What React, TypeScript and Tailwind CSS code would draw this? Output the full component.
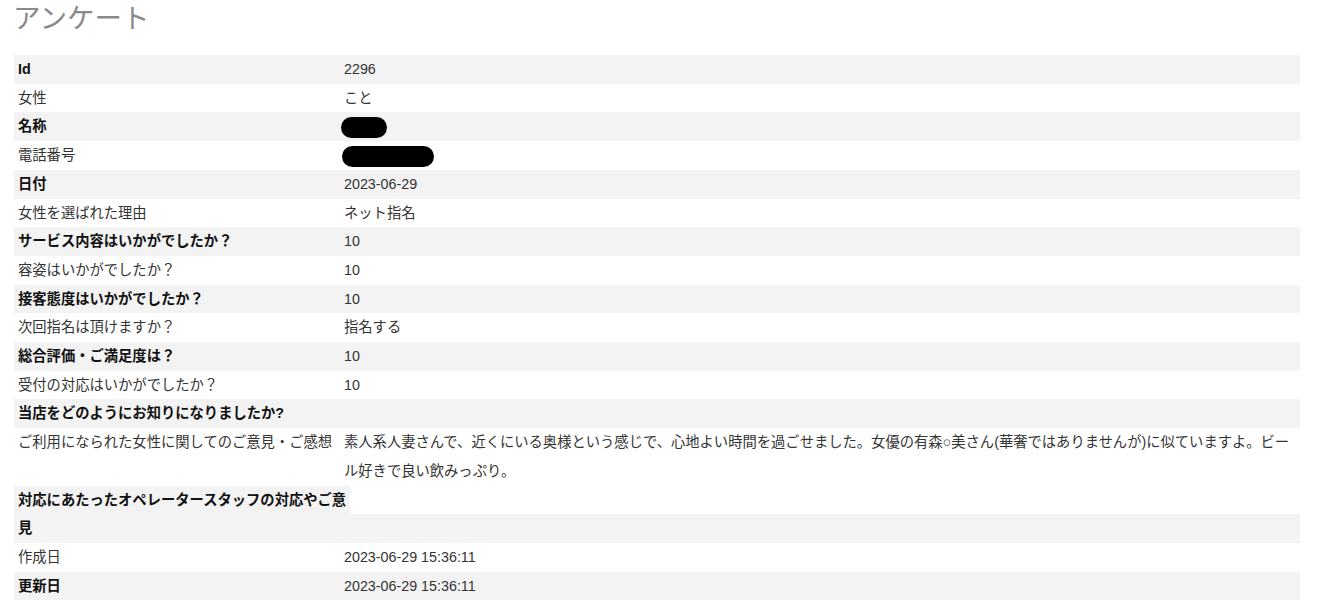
import React from "react";

type Row = { label: string; value?: React.ReactNode };

const rows: Row[] = [
  { label: "Id", value: "2296" },
  { label: "女性", value: "こと" },
  { label: "名称", value: <span className="inline-block align-middle w-[46px] h-[21px] rounded-full bg-black -ml-[3px]" /> },
  { label: "電話番号", value: <span className="inline-block align-middle w-[92px] h-[21px] rounded-full bg-black -ml-[2px]" /> },
  { label: "日付", value: "2023-06-29" },
  { label: "女性を選ばれた理由", value: "ネット指名" },
  { label: "サービス内容はいかがでしたか？", value: "10" },
  { label: "容姿はいかがでしたか？", value: "10" },
  { label: "接客態度はいかがでしたか？", value: "10" },
  { label: "次回指名は頂けますか？", value: "指名する" },
  { label: "総合評価・ご満足度は？", value: "10" },
  { label: "受付の対応はいかがでしたか？", value: "10" },
  { label: "当店をどのようにお知りになりましたか?", value: "" },
  {
    label: "ご利用になられた女性に関してのご意見・ご感想",
    value:
      "素人系人妻さんで、近くにいる奥様という感じで、心地よい時間を過ごせました。女優の有森○美さん(華奢ではありませんが)に似ていますよ。ビール好きで良い飲みっぷり。",
  },
];

const tail: Row[] = [
  { label: "作成日", value: "2023-06-29 15:36:11" },
  { label: "更新日", value: "2023-06-29 15:36:11" },
];

function TableRow({ row, gray }: { row: Row; gray: boolean }) {
  return (
    <div className={`grid grid-cols-[330px_1fr] leading-[28.7px] ${gray ? "bg-[#f3f3f3]" : "bg-white"}`}>
      <div className={`pl-1 ${gray ? "font-bold text-[#111]" : "font-normal text-[#333]"}`}>{row.label}</div>
      <div className="text-[#333]">{row.value}</div>
    </div>
  );
}

export default function App() {
  return (
    <div
      className="min-h-[613px] bg-white px-[14px] pt-[1px] text-[14.3px]"
      style={{ fontFamily: '"Liberation Sans", "Noto Sans CJK JP", sans-serif' }}
    >
      <h1 className="text-[27.5px] leading-[36px] text-[#8a8a8a] font-normal mb-[18px] -ml-[1px]">
        アンケート
      </h1>
      <div className="w-[1286px]">
        {rows.map((r, i) => (
          <TableRow key={i} row={r} gray={i % 2 === 0} />
        ))}
        <div className="leading-[28.7px]">
          <div className="flex">
            <div className="bg-[#f3f3f3] w-[336px] pl-1 font-bold text-[#111] whitespace-nowrap">
              対応にあたったオペレータースタッフの対応やご意
            </div>
            <div className="flex-1 bg-white" />
          </div>
          <div className="bg-[#f3f3f3] pl-1 font-bold text-[#111]">見</div>
        </div>
        {tail.map((r, i) => (
          <TableRow key={i} row={r} gray={i % 2 === 1} />
        ))}
      </div>
    </div>
  );
}
